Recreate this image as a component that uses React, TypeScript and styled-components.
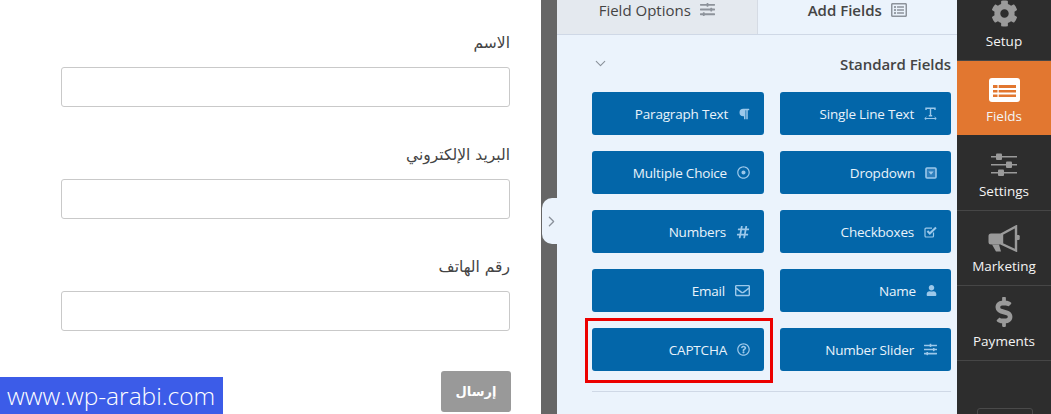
import React from 'react';
import styled, { createGlobalStyle } from 'styled-components';
import { ChevronDown, ChevronRight } from 'lucide-react';
import {
  FaCog,
  FaDollarSign,
  FaHashtag,
  FaParagraph,
  FaRegDotCircle,
  FaRegEnvelope,
  FaRegListAlt,
  FaRegQuestionCircle,
  FaSlidersH,
  FaUser,
} from 'react-icons/fa';

const FORM_FIELDS = ['الاسم', 'البريد الإلكتروني', 'رقم الهاتف'];

const TextIcon = () => (
  <svg width="13" height="13" viewBox="0 0 13 13" fill="none" stroke="currentColor">
    <path d="M2 3V1.2h9V3M6.5 1.2v7.6M4.8 8.8h3.4" strokeWidth="1.4" />
    <path d="M.8 11.5h11.4M2.4 10l-1.6 1.5L2.4 13M10.6 10l1.6 1.5L10.6 13" strokeWidth="1" />
  </svg>
);

const DropdownIcon = () => (
  <svg width="12" height="12" viewBox="0 0 12 12">
    <rect x="1" y="1" width="10" height="10" rx="1" fill="#2f80bd" stroke="currentColor" strokeWidth="1.6" />
    <path d="M3.3 4.4h5.4L6 7.8z" fill="currentColor" />
  </svg>
);

const CheckIcon = () => (
  <svg width="13" height="12" viewBox="0 0 13 12" fill="none" stroke="currentColor">
    <path d="M9.5 6.5V10a1 1 0 0 1-1 1H2a1 1 0 0 1-1-1V3.2a1 1 0 0 1 1-1h6" strokeWidth="1.2" />
    <path d="M3.4 5l2.4 2.5L12 1.6" strokeWidth="2.1" />
  </svg>
);

const FieldsIcon = () => (
  <svg width="31" height="24" viewBox="0 0 31 24">
    <rect width="31" height="24" rx="3" fill="#fff" />
    <path d="M4 7h23v3H4zM4 12h23v2.5H4zM4 16.5h23V19H4z" fill="#e27730" />
    <path d="M8.5 6.5h1.2v13H8.5z" fill="#fff" />
  </svg>
);

const SettingsIcon = () => (
  <svg width="26" height="24" viewBox="0 0 26 24" fill="currentColor">
    <path d="M0 3h26v1.4H0zM0 11h26v1.4H0zM0 19h26v1.4H0z" />
    <rect x="5" y="0.5" width="6" height="6.5" rx="1" />
    <rect x="15" y="8.5" width="6" height="6.5" rx="1" />
    <rect x="7" y="16.5" width="6" height="6.5" rx="1" />
  </svg>
);

const MarketingIcon = () => (
  <svg width="32" height="27" viewBox="0 0 32 27">
    <path d="M3 8.5h11v11H3a2.5 2.5 0 0 1-2.5-2.5v-6A2.5 2.5 0 0 1 3 8.5z" fill="currentColor" />
    <path d="M14 9L28 1.5v24L14 19z" fill="none" stroke="currentColor" strokeWidth="2.4" />
    <path d="M29 10h1.5a1.2 1.2 0 0 1 1.2 1.2v2.6a1.2 1.2 0 0 1-1.2 1.2H29z" fill="currentColor" />
    <path d="M4 19.5h7l2 7H8z" fill="currentColor" />
  </svg>
);

const STANDARD_FIELDS = [
  { title: 'Paragraph Text', icon: <FaParagraph size={12} /> },
  { title: 'Single Line Text', icon: <TextIcon /> },
  { title: 'Multiple Choice', icon: <FaRegDotCircle size={13} /> },
  { title: 'Dropdown', icon: <DropdownIcon /> },
  { title: 'Numbers', icon: <FaHashtag size={14} /> },
  { title: 'Checkboxes', icon: <CheckIcon /> },
  { title: 'Email', icon: <FaRegEnvelope size={15} /> },
  { title: 'Name', icon: <FaUser size={11} /> },
  { title: 'CAPTCHA', icon: <FaRegQuestionCircle size={13} />, marked: true },
  { title: 'Number Slider', icon: <FaSlidersH size={13} /> },
];

const MENU = [
  { title: 'Setup', icon: <FaCog size={27} />, height: 61 },
  { title: 'Fields', icon: <FieldsIcon />, height: 75, active: true },
  { title: 'Settings', icon: <SettingsIcon />, height: 75 },
  { title: 'Marketing', icon: <MarketingIcon />, height: 75 },
  { title: 'Payments', icon: <FaDollarSign size={30} />, height: 75 },
];

const GlobalStyle = createGlobalStyle`
  html, body {
    margin: 0;
    padding: 0;
    background: #fff;
  }
  body {
    font-family: "Open Sans", "DejaVu Sans", sans-serif;
  }
`;

const Page = styled.div`
  position: relative;
  display: flex;
  width: 1051px;
  height: 414px;
  overflow: hidden;
`;

const Preview = styled.div`
  width: 541px;
  flex: none;
  box-sizing: border-box;
  padding: 32px 31px 0 61px;
  display: flex;
  flex-direction: column;
  background: #fff;
`;

const FormField = styled.div`
  display: flex;
  flex-direction: column;
  height: 112px;
`;

const Label = styled.label`
  direction: rtl;
  height: 35px;
  line-height: 22px;
  font-family: "DejaVu Sans", sans-serif;
  font-size: 15.5px;
  color: #444;
`;

const Input = styled.div`
  box-sizing: border-box;
  height: 40px;
  background: #fff;
  border: 1px solid #c9c9c9;
  border-radius: 3px;
`;

const SubmitRow = styled.div`
  display: flex;
  justify-content: flex-end;
  margin: 3px -1px 0 0;
`;

const Submit = styled.button`
  width: 70px;
  height: 41px;
  padding: 0;
  border: 0;
  border-radius: 3px;
  background: #999;
  color: #fff;
  font-family: "DejaVu Sans", sans-serif;
  font-size: 13px;
  font-weight: 700;
`;

const Gutter = styled.div`
  position: relative;
  width: 16px;
  flex: none;
  background: #666;
`;

const Handle = styled.div`
  position: absolute;
  left: 1px;
  top: 198px;
  width: 15px;
  height: 46px;
  box-sizing: border-box;
  padding-left: 3px;
  display: flex;
  align-items: center;
  justify-content: center;
  background: #ebf3fc;
  border-radius: 10px 0 0 10px;
  color: #8a919a;
  svg {
    flex: none;
  }
`;

const Panel = styled.div`
  width: 400px;
  flex: none;
  display: flex;
  flex-direction: column;
  background: #ebf3fc;
`;

const Tabs = styled.div`
  display: flex;
  height: 35px;
  flex: none;
  box-sizing: border-box;
  border-bottom: 1px solid #cfd8e6;
`;

const Tab = styled.div<{ $active?: boolean }>`
  flex: 1;
  display: flex;
  align-items: center;
  justify-content: center;
  gap: 9px;
  padding-bottom: 15px;
  font-size: 15px;
  font-weight: ${(p) => (p.$active ? 600 : 400)};
  color: #444;
  background: ${(p) => (p.$active ? '#ebf3fc' : '#e4e9ef')};
  border-right: ${(p) => (p.$active ? 'none' : '1px solid #d5dbe4')};
  svg {
    color: #8d939b;
  }
`;

const Section = styled.div`
  padding: 0 6px 0 35px;
`;

const SectionHead = styled.div`
  display: flex;
  align-items: center;
  justify-content: space-between;
  height: 57px;
  color: #8a919a;
`;

const SectionTitle = styled.h3`
  margin: 0;
  font-size: 15px;
  font-weight: 600;
  letter-spacing: -0.05px;
  color: #444;
`;

const FieldGrid = styled.div`
  display: grid;
  grid-template-columns: 172px 171px;
  grid-auto-rows: 43px;
  column-gap: 16px;
  row-gap: 16px;
`;

const FieldButton = styled.div<{ $marked?: boolean }>`
  position: relative;
  display: flex;
  align-items: center;
  justify-content: flex-end;
  gap: 10px;
  padding-right: 14px;
  background: #0366a9;
  border-radius: 3px;
  color: #e9f3fb;
  font-size: 13.5px;
  letter-spacing: -0.2px;
  svg {
    flex: none;
    color: #9cc8ea;
  }
  ${(p) =>
    p.$marked &&
    `
    &::after {
      content: '';
      position: absolute;
      inset: -10px -9px -12px -7px;
      border: 3px solid #ec0000;
    }
  `}
`;

const Divider = styled.div`
  height: 1px;
  margin-top: 20px;
  background: #cfd8e6;
`;

const Sidebar = styled.nav`
  position: relative;
  width: 94px;
  flex: none;
  background: #2d2d2d;
`;

const MenuItem = styled.div<{ $active?: boolean; $height: number }>`
  height: ${(p) => p.$height}px;
  box-sizing: border-box;
  display: flex;
  flex-direction: column;
  align-items: center;
  justify-content: flex-end;
  gap: 5px;
  padding-bottom: 10px;
  border-bottom: 1px solid ${(p) => (p.$active ? '#2d2d2d' : '#464646')};
  background: ${(p) => (p.$active ? '#e27730' : 'transparent')};
  color: #f4f4f4;
  font-size: 13.5px;
  svg {
    color: ${(p) => (p.$active ? '#fff' : '#9a9a9a')};
  }
`;

const SmallButton = styled.div`
  position: absolute;
  left: 20px;
  top: 408px;
  width: 54px;
  height: 20px;
  border: 1px solid #4a4a4a;
  border-radius: 3px;
`;

const Watermark = styled.div`
  position: absolute;
  left: 0;
  bottom: 0;
  width: 223px;
  height: 37px;
  box-sizing: border-box;
  padding-left: 7px;
  display: flex;
  align-items: center;
  background: #3c5ce8;
  color: #fff;
  font-size: 24.5px;
  font-weight: 300;
`;

const App = () => {
  return (
    <Page>
      <GlobalStyle />
      <Preview>
        {FORM_FIELDS.map((label) => (
          <FormField key={label}>
            <Label>{label}</Label>
            <Input />
          </FormField>
        ))}
        <SubmitRow>
          <Submit>إرسال</Submit>
        </SubmitRow>
      </Preview>
      <Gutter>
        <Handle>
          <ChevronRight size={17} strokeWidth={1.8} />
        </Handle>
      </Gutter>
      <Panel>
        <Tabs>
          <Tab>
            Field Options <FaSlidersH size={15} />
          </Tab>
          <Tab $active>
            Add Fields <FaRegListAlt size={16} />
          </Tab>
        </Tabs>
        <Section>
          <SectionHead>
            <ChevronDown size={17} strokeWidth={1.5} />
            <SectionTitle>Standard Fields</SectionTitle>
          </SectionHead>
          <FieldGrid>
            {STANDARD_FIELDS.map((item) => (
              <FieldButton key={item.title} $marked={item.marked}>
                {item.title}
                {item.icon}
              </FieldButton>
            ))}
          </FieldGrid>
          <Divider />
        </Section>
      </Panel>
      <Sidebar>
        {MENU.map((item) => (
          <MenuItem key={item.title} $active={item.active} $height={item.height}>
            {item.icon}
            {item.title}
          </MenuItem>
        ))}
        <SmallButton />
      </Sidebar>
      <Watermark>www.wp-arabi.com</Watermark>
    </Page>
  );
};

export default App;
